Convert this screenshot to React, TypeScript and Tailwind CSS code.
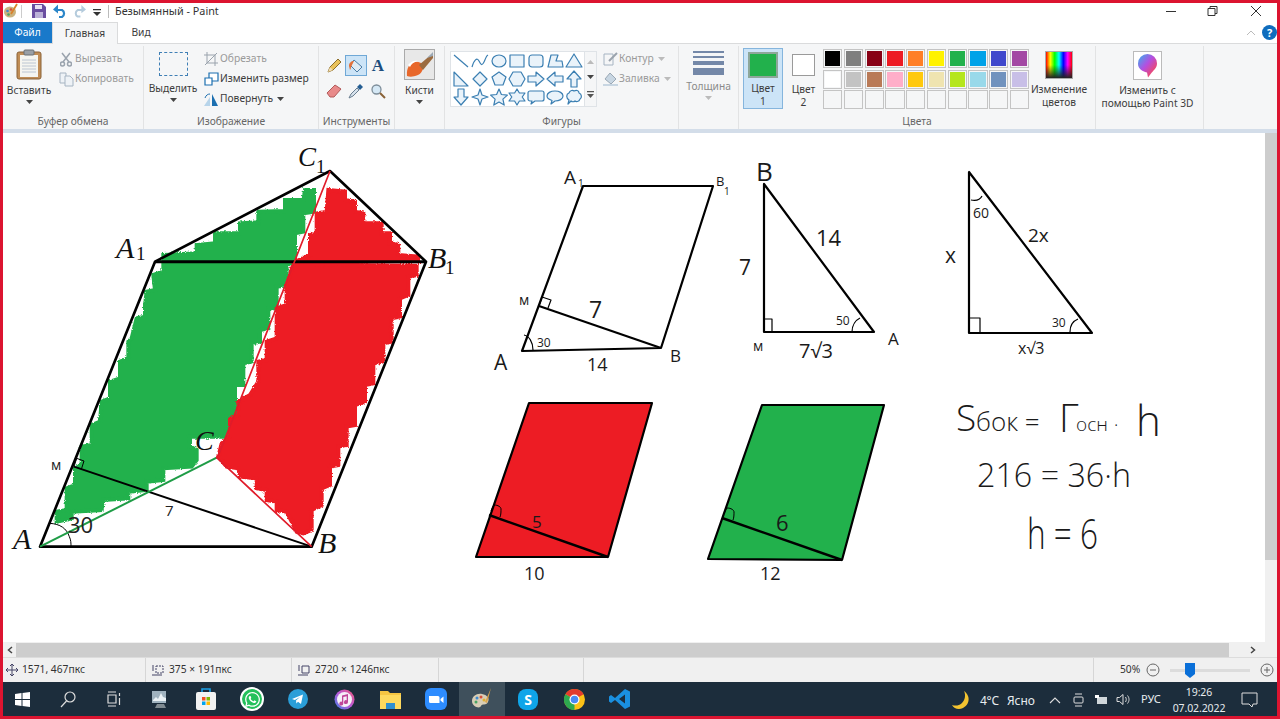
import React from "react";
import { FaWhatsapp } from "react-icons/fa";

const FONT = { fontFamily: '"Noto Sans","Open Sans",sans-serif' };

const Caret = ({ c = "#444" }: { c?: string }) => (
  <svg width="7" height="4" viewBox="0 0 7 4"><path d="M0 0h7L3.5 4z" fill={c} /></svg>
);

function Shape({ d, fill = true }: { d: string; fill?: boolean }) {
  return (
    <svg width="18" height="18" viewBox="0 0 18 18">
      <path d={d} fill={fill ? "#eaf3fa" : "none"} stroke="#3b7fb2" strokeWidth="1.2" strokeLinejoin="round" />
    </svg>
  );
}

const shapes: [string, boolean?][] = [
  ["M2 3L16 15", false],
  ["M1 15C3 8 6 5 8 9s3 5 5 1 2-6 4-7", false],
  ["M2 9a7 6 0 1 0 14 0a7 6 0 1 0-14 0z"],
  ["M2 3h14v12H2z"],
  ["M2 6a3 3 0 0 1 3-3h8a3 3 0 0 1 3 3v6a3 3 0 0 1-3 3H5a3 3 0 0 1-3-3z"],
  ["M2 15L5 3h7l-2 6h6l1 6z"],
  ["M9 2l8 13H1z"],
  ["M2 2l14 14H2z"],
  ["M9 2l7 7-7 7-7-7z"],
  ["M9 2l7 5-3 8H5L2 7z"],
  ["M5 2h8l4 7-4 7H5L1 9z"],
  ["M1 6h8V2l8 7-8 7v-4H1z"],
  ["M17 6H9V2L1 9l8 7v-4h8z"],
  ["M6 17V9H2l7-8 7 8h-4v8z"],
  ["M6 1v8H2l7 8 7-8h-4V1z"],
  ["M9 1l2 6 6 2-6 2-2 6-2-6-6-2 6-2z"],
  ["M9 1l2.4 5.5 6 .6-4.5 4 1.3 6L9 14l-5.200 3.100 1.300-6-4.500-4 6-.6z"],
  ["M9 1l2.400 4H17l-2.800 4 2.800 4h-5.600L9 17l-2.400-4H1l2.800-4L1 5h5.600z"],
  ["M3 3h12a2 2 0 0 1 2 2v6a2 2 0 0 1-2 2H8l-4 3 1-3H3a2 2 0 0 1-2-2V5a2 2 0 0 1 2-2z"],
  ["M9 3c4.400 0 8 2 8 5s-3.600 5-8 5l-4 3 1-3.500C3 11.500 1 10 1 8c0-3 3.600-5 8-5z"],
  ["M4 5c1-3 4-3 5-2 2-1 5-1 5 2 3 1 3 5 1 6-1 3-4 3-5 2-1 1-3 1-4 0l-3 3 1-4C1 10 1 6 4 5z"],
];

const row1 = ["#000000", "#7f7f7f", "#880015", "#ed1c24", "#ff7f27", "#fff200", "#22b14c", "#00a2e8", "#3f48cc", "#a349a4"];
const row2 = ["#ffffff", "#c3c3c3", "#b97a57", "#ffaec9", "#ffc90e", "#efe4b0", "#b5e61d", "#99d9ea", "#7092be", "#c8bfe7"];
const row3 = Array.from({ length: 10 }, () => "#f5f6f7");

function Group({ w, label, children, last }: { w: string; label: string; children: React.ReactNode; last?: boolean }) {
  return (
    <div className={`${w} flex flex-col shrink-0 ${last ? "" : "border-r border-[#e2e3e4]"} h-[83px] mt-[2px]`}>
      <div className="flex-1 flex min-h-0">{children}</div>
      <div className="h-[15px] text-center text-[10.25px] leading-[15px] text-[#666]">{label}</div>
    </div>
  );
}

function SmallBtn({ icon, text, gray, caret }: { icon: React.ReactNode; text: string; gray?: boolean; caret?: boolean }) {
  return (
    <div className={`h-[20px] flex items-center gap-[1px] text-[10.25px] ${gray ? "text-[#9a9a9a]" : "text-[#3c3c3c]"}`}>
      <span className="w-[16px] h-[16px] flex items-center justify-center">{icon}</span>
      <span>{text}</span>
      {caret && <span className="ml-[3px] flex"><Caret c={gray ? "#bbb" : "#444"} /></span>}
    </div>
  );
}

function BigLabel({ children, gray }: { children: React.ReactNode; gray?: boolean }) {
  return <div className={`text-[10.2px] leading-[13px] text-center ${gray ? "text-[#8a8a8a]" : "text-[#3c3c3c]"}`}>{children}</div>;
}

function TitleBar() {
  return (
    <div className="h-[19px] flex items-center bg-white shrink-0 pb-[3px]">
      <svg width="14" height="16" viewBox="0 0 14 16" className="ml-[1px]">
        <ellipse cx="6" cy="9" rx="6" ry="5.500" fill="#c9b27f" />
        <circle cx="3.500" cy="8" r="1.300" fill="#3f8bd0" /><circle cx="7" cy="6.500" r="1.300" fill="#d6503a" /><circle cx="4.500" cy="11.500" r="1.300" fill="#4aa564" />
        <path d="M13 1L7 11" stroke="#d9822b" strokeWidth="1.800" />
      </svg>
      <div className="w-px h-[13px] bg-[#ccc] ml-[3px]" />
      <svg width="14" height="14" viewBox="0 0 14 14" className="ml-[10px]">
        <path d="M0 0h11l3 3v11H0z" fill="#6a4ea0" /><path d="M3 1h7v4H3z" fill="#e8e4f2" /><path d="M3 8h8v6H3z" fill="#bcb2d8" />
      </svg>
      <svg width="14" height="14" viewBox="0 0 14 14" className="ml-[7px]" fill="none">
        <path d="M2 6h7a4 4 0 0 1 0 7H6" stroke="#2b86c9" strokeWidth="2.200" /><path d="M5 1v9L0 6z" fill="#2b86c9" transform="translate(0 -.5)" />
      </svg>
      <svg width="13" height="14" viewBox="0 0 14 14" className="ml-[6px]" fill="none">
        <path d="M12 6H5a4 4 0 0 0 0 7h3" stroke="#b4cbdc" strokeWidth="2.200" /><path d="M9 1v9l5-4z" fill="#b4cbdc" transform="translate(0 -.5)" />
      </svg>
      <svg width="8" height="7" viewBox="0 0 8 7" className="ml-[7px] mt-[2px]"><path d="M0 0h8v1.200H0zM0 3h8L4 7z" fill="#333" /></svg>
      <div className="w-px h-[13px] bg-[#bbb] ml-[7px]" />
      <div className="ml-[6px] text-[10.8px] text-[#333] leading-none">Безымянный - Paint</div>
      <div className="flex-1" />
      <svg width="100" height="12" viewBox="0 0 100 12" className="mr-[15px]" fill="none" stroke="#333" strokeWidth="1">
        <path d="M4 6.500h10" />
        <path d="M46 3.500h7v7h-7zM48 3.500V1.500h7v7h-2" />
        <path d="M89 1l10 10M99 1L89 11" />
      </svg>
    </div>
  );
}

function TabBar() {
  return (
    <div className="h-[22px] flex items-stretch bg-white border-b border-[#dadbdc] shrink-0 text-[10.25px]">
      <div className="w-[49px] bg-[#1979ca] text-white flex items-center justify-center">Файл</div>
      <div className="w-[66px] h-[22px] bg-[#f5f6f7] border-x border-t border-[#dadbdc] text-[#3c3c3c] flex items-center justify-center">Главная</div>
      <div className="w-[46px] text-[#3c3c3c] flex items-center justify-center">Вид</div>
      <div className="flex-1" />
      <div className="flex items-center gap-[6px] pr-[0px]">
        <svg width="10" height="6" viewBox="0 0 10 6" fill="none" stroke="#bbb"><path d="M1 5l4-4 4 4" /></svg>
        <div className="w-[15px] h-[15px] rounded-full bg-[#0f6cbd] text-white text-[11px] font-bold leading-[15px] text-center">?</div>
      </div>
    </div>
  );
}

function Ribbon() {
  return (
    <div className="h-[85px] flex bg-[#f5f6f7] shrink-0 text-[#3c3c3c]">
      <Group w="w-[141px]" label="Буфер обмена">
        <div className="w-[52px] flex flex-col items-center pt-[3px]">
          <svg width="26" height="31" viewBox="0 0 26 31">
            <rect x="1" y="3" width="24" height="27" rx="2" fill="#c08d56" stroke="#8a6238" />
            <rect x="4" y="6" width="18" height="22" fill="#f5f5f0" />
            <path d="M6 11h14M6 14h14M6 17h14M6 20h14M6 23h14" stroke="#bcc6d2" />
            <rect x="8" y="1" width="10" height="5" rx="1" fill="#9aa0a6" stroke="#6b7075" />
          </svg>
          <div className="mt-[4px]"><BigLabel>Вставить</BigLabel></div>
          <div className="mt-[3px] flex"><Caret /></div>
        </div>
        <div className="pl-[3px] pt-[3px]">
          <SmallBtn gray text="Вырезать" icon={<svg width="12" height="15" viewBox="0 0 12 15" fill="none" stroke="#9aa3ad" strokeWidth="1.500"><path d="M2 1l7 9M10 1L3 10" /><circle cx="2.500" cy="12" r="2" /><circle cx="9.500" cy="12" r="2" /></svg>} />
          <SmallBtn gray text="Копировать" icon={<svg width="15" height="15" viewBox="0 0 15 15" fill="#eef2f6" stroke="#a6b4c2"><path d="M1 1h6v10H1z" /><path d="M6 4h5l3 3v7H6z" /></svg>} />
        </div>
      </Group>
      <Group w="w-[175px]" label="Изображение">
        <div className="w-[56px] pl-[2px] flex flex-col items-center pt-[6px]">
          <div className="w-[29px] h-[24px] border border-dashed border-[#3f7fb5]" />
          <div className="mt-[6px]"><BigLabel>Выделить</BigLabel></div>
          <div className="mt-[3px] flex"><Caret /></div>
        </div>
        <div className="pt-[3px] pl-[3px]">
          <SmallBtn gray text="Обрезать" icon={<svg width="14" height="14" viewBox="0 0 14 14" fill="none" stroke="#9aa3ad"><path d="M3 0v11h11M0 3h11v11M1 13L13 1" /></svg>} />
          <SmallBtn text="Изменить размер" icon={<svg width="15" height="14" viewBox="0 0 15 14" fill="#fff" stroke="#1c6fb0" strokeWidth="1.200"><path d="M5 1h9v8H5z" /><path d="M1 6h7v7H1z" /></svg>} />
          <SmallBtn caret text="Повернуть" icon={<svg width="16" height="13" viewBox="0 0 16 13"><path d="M1 13L7 4v9z" fill="#b7d4ea" /><path d="M9 1l6 12H9z" fill="#1c6fb0" /><path d="M2 5c1-3 3-4 5-4" stroke="#1c6fb0" fill="none" /></svg>} />
        </div>
      </Group>
      <Group w="w-[76px]" label="Инструменты">
        <div className="grid grid-cols-3 grid-rows-2 w-[66px] h-[50px] ml-[4px] mt-[7px] place-items-center">
          <svg width="16" height="16" viewBox="0 0 16 16"><path d="M2 14l2-5 8-8 3 3-8 8z" fill="#eac25a" stroke="#8b6d2b" /><path d="M2 14l2-5 3 3z" fill="#f2dcb0" /></svg>
          <div className="w-[22px] h-[21px] bg-[#cce4f7] border border-[#6fa8d6] flex items-center justify-center">
            <svg width="16" height="16" viewBox="0 0 16 16"><path d="M6 2l8 7-5 5-7-7z" fill="#dfeaf3" stroke="#4a7ca5" /><path d="M1 8c0-3 2-5 5-5l-3 6c0 2-1 3-1 3z" fill="#e2703a" /></svg>
          </div>
          <span className="text-[#1c4d7e] font-bold text-[17px] leading-none" style={{ fontFamily: '"Liberation Serif",serif' }}>A</span>
          <svg width="16" height="14" viewBox="0 0 16 14"><path d="M1 9l8-8 6 4-7 8H4z" fill="#e88a8a" stroke="#b25a5a" /></svg>
          <svg width="16" height="16" viewBox="0 0 16 16"><path d="M1 15l2-4 6-6 2 2-6 6z" fill="#d7e2ec" stroke="#6b7f91" /><path d="M9 4l3-3 3 3-3 3z" fill="#245d92" /></svg>
          <svg width="16" height="16" viewBox="0 0 16 16" fill="none"><circle cx="6.500" cy="6.500" r="4.500" fill="#d5e8f5" stroke="#7d8d99" strokeWidth="1.300" /><path d="M10 10l5 5" stroke="#8a6238" strokeWidth="2" /></svg>
        </div>
      </Group>
      <Group w="w-[50px]" label="">
        <div className="w-full flex flex-col items-center pt-[3px]">
          <div className="w-[31px] h-[31px] bg-[#e8e8e8] border border-[#aaa] overflow-hidden">
            <svg width="29" height="29" viewBox="0 0 29 29"><path d="M2 26C1 16 7 9 16 13c4 2 2 10-3 12s-8 2-11 1z" fill="#e8672a" /><path d="M14 15L28 3v5L18 20z" fill="#9b6b3f" /><path d="M22 8l6-6v4z" fill="#9aa8b5" /><path d="M3 15c3-4 7-5 10-4-4 1-7 3-8 6z" fill="#fff" /></svg>
          </div>
          <div className="mt-[4px]"><BigLabel>Кисти</BigLabel></div>
          <div className="mt-[3px] flex"><Caret /></div>
        </div>
      </Group>
      <Group w="w-[234px]" label="Фигуры">
        <div className="ml-[5px] mt-[5px] w-[147px] h-[56px] border border-[#dfe3e7] bg-white flex">
          <div className="grid grid-cols-7 w-[133px] px-[1px] place-items-center">
            {shapes.map(([d, f], i) => <Shape key={i} d={d} fill={f !== false} />)}
          </div>
          <div className="flex-1 border-l border-[#dfe3e7] bg-[#f5f6f7] flex flex-col items-center justify-around py-[2px]">
            <svg width="7" height="4" viewBox="0 0 7 4"><path d="M0 4h7L3.500 0z" fill="#bbb" /></svg>
            <Caret />
            <svg width="7" height="7" viewBox="0 0 7 7"><path d="M0 0h7v1.200H0zM0 3h7L3.500 7z" fill="#555" /></svg>
          </div>
        </div>
        <div className="pl-[5px] pt-[3px]">
          <SmallBtn gray caret text="Контур" icon={<svg width="15" height="14" viewBox="0 0 15 14" fill="none" stroke="#a6b4c2"><path d="M1 2h9v11H1z" /><path d="M6 9l8-8" stroke="#9aa3ad" strokeWidth="2" /></svg>} />
          <SmallBtn gray caret text="Заливка" icon={<svg width="15" height="14" viewBox="0 0 15 14"><path d="M7 1l6 6-5 5-6-5z" fill="#c8d6e2" stroke="#9aa8b5" /><path d="M0 12h15v2H0z" fill="#c8d6e2" /></svg>} />
        </div>
      </Group>
      <Group w="w-[60px]" label="">
        <div className="w-full flex flex-col items-center pt-[5px]">
          <div className="w-[31px] flex flex-col gap-[3px]">
            <div className="h-[1.500px] bg-[#7488a8]" /><div className="h-[2px] bg-[#7488a8]" /><div className="h-[4px] bg-[#7488a8]" /><div className="h-[7px] bg-[#7488a8]" />
          </div>
          <div className="mt-[5px]"><BigLabel gray>Толщина</BigLabel></div>
          <div className="mt-[3px] flex"><Caret c="#bbb" /></div>
        </div>
      </Group>
      <Group w="w-[357px]" label="Цвета">
        <div className="ml-[4px] mt-[2px] w-[40px] h-[61px] bg-[#cce4f7] border border-[#85b5dd] flex flex-col items-center pt-[3px]">
          <div className="w-[30px] h-[30px] bg-[#22b14c] border-2 border-[#8da79a]" />
          <div className="mt-[4px]"><BigLabel>Цвет<br />1</BigLabel></div>
        </div>
        <div className="ml-[3px] mt-[2px] w-[35px] h-[61px] flex flex-col items-center pt-[6px]">
          <div className="w-[23px] h-[24px] bg-white border border-[#9a9a9a]" />
          <div className="mt-[7px]"><BigLabel>Цвет<br />2</BigLabel></div>
        </div>
        <div className="ml-[2px] mt-[3px] grid grid-cols-10 gap-[1.500px] w-[206px] h-[60px]">
          {[...row1, ...row2, ...row3].map((c, i) => (
            <div key={i} className="border border-[#c4c4c4] p-px bg-[#f5f6f7]">
              <div className="w-full h-full" style={{ background: c }} />
            </div>
          ))}
        </div>
        <div className="w-[60px] flex flex-col items-center pt-[5px]">
          <div className="w-[28px] h-[28px] border border-[#aaa] bg-[linear-gradient(180deg,transparent_50%,#222_100%),linear-gradient(90deg,#f00,#ff0,#0f0,#0ff,#00f,#f0f,#f00)]" />
          <div className="mt-[4px]"><BigLabel>Изменение<br />цветов</BigLabel></div>
        </div>
      </Group>
      <Group w="w-[108px]" label="">
        <div className="w-full flex flex-col items-center pt-[5px] pr-[4px]">
          <div className="w-[29px] h-[29px] bg-white border border-[#bbb] flex items-center justify-center">
            <svg width="19" height="24" viewBox="0 0 19 24">
              <defs><linearGradient id="p3d" x1="0" y1="0" x2="1" y2="1"><stop offset="0" stopColor="#30b6f0" /><stop offset=".45" stopColor="#b44fe0" /><stop offset=".8" stopColor="#f0486a" /><stop offset="1" stopColor="#f7b32b" /></linearGradient></defs>
              <path d="M9.500 0a9.500 9.500 0 0 1 9.500 9.500c0 5-4 7-6 10l-3 4-1-5C4 17 0 15 0 9.500A9.500 9.500 0 0 1 9.500 0z" fill="url(#p3d)" />
            </svg>
          </div>
          <div className="mt-[4px]"><BigLabel>Изменить с<br />помощью Paint 3D</BigLabel></div>
        </div>
      </Group>
      <div className="flex-1" />
    </div>
  );
}

function Figure1() {
  const green = "490,360 590,355 590,330 645,325 645,295 720,295 720,265 775,262 775,230 855,228 855,195 910,195 915,165 942,165 942,230 910,235 910,290 885,295 885,375 860,392 860,450 830,455 830,520 805,520 805,580 780,585 780,620 755,625 755,680 730,685 730,750 705,750 705,840 680,845 680,905 640,905 570,905 570,935 590,945 590,975 575,995 490,1000 490,1035 440,1040 440,1065 385,1070 385,1090 310,1095 305,1125 215,1130 215,1150 170,1160 170,1130 200,1125 200,1060 225,1050 225,1000 245,990 245,935 275,930 275,870 300,860 305,800 330,790 330,740 360,730 360,680 385,670 385,620 395,610 410,550 435,545 435,510 440,470 465,465 460,420 490,410";
  const red1 = "985,165 1035,170 1035,195 1065,200 1065,230 1090,235 1090,265 1145,265 1145,295 1170,295 1170,325 1195,330 1195,360 1255,365 1255,378 890,378 930,360 930,300 950,295 950,235 980,230";
  const red2 = "880,388 1250,392 1250,420 1225,425 1225,480 1200,490 1200,545 1175,550 1175,620 1150,625 1150,680 1120,685 1120,745 1095,750 1095,800 1065,810 1065,870 1040,875 1040,930 1015,935 1015,990 990,995 990,1050 965,1060 965,1110 935,1125 935,1185 910,1195 890,1190 860,1130 830,1125 830,1100 800,1095 800,1065 770,1060 770,1030 720,1025 715,1000 680,995 655,965 665,925 690,905 690,850 715,840 715,800 750,780 775,740 775,680 800,675 800,620 830,610 830,520 860,510 860,450";
  return (
    <g>
      <g transform="translate(0 135) scale(.33333)">
        <g filter="url(#rough)">
          <polygon points={green} fill="#22b14c" stroke="#22b14c" strokeWidth="12" />
          <polygon points={red1} fill="#ed1c24" stroke="#ed1c24" strokeWidth="12" />
          <polygon points={red2} fill="#ed1c24" stroke="#ed1c24" strokeWidth="12" />
        </g>
        <g fill="none" stroke="#000" strokeWidth="8" strokeLinejoin="round">
          <path d="M120 1235L465 380L990 108L1278 380L935 1235z" />
          <path d="M465 380H1278" strokeWidth="9" />
          <path d="M222 995L935 1235" strokeWidth="6" />
          <path d="M222 995l8-25 22 8-8 25" strokeWidth="3" />
          <path d="M150 1165c30 2 50 15 58 40M208 1205c5 10 5 20 5 30" strokeWidth="3" />
        </g>
        <path d="M120 1235L650 968" stroke="#1e9c46" strokeWidth="6" />
        <path d="M935 1235L650 968L660 950L990 108" stroke="#e01c2a" strokeWidth="5" fill="none" />
      </g>
      <g fontFamily='"Liberation Serif",serif' fontStyle="italic" fill="#111">
        <text x="116" y="258" fontSize="30">A</text>
        <text x="428" y="268" fontSize="30">B</text>
        <text x="298" y="166" fontSize="27">C</text>
        <text x="13" y="549" fontSize="30">A</text>
        <text x="318" y="553" fontSize="30">B</text>
        <text x="195" y="450" fontSize="28">C</text>
      </g>
      <g fontFamily='"Liberation Serif",serif' fontSize="19" fill="#111">
        <text x="136" y="260">1</text>
        <text x="445" y="274">1</text>
        <text x="316" y="173">1</text>
      </g>
      <g fontFamily='"Open Sans",sans-serif' fill="#222">
        <text x="51" y="470" fontSize="14">м</text>
        <text x="68" y="533" fontSize="22">30</text>
        <text x="165" y="516" fontSize="15">7</text>
      </g>
    </g>
  );
}

function Hand({ x, y, s = 14, children, w = 400, len }: { x: number; y: number; s?: number; children: React.ReactNode; w?: number; len?: number }) {
  return (
    <text
      x={x}
      y={y}
      fontSize={s}
      fontWeight={w}
      fontFamily='"Open Sans",sans-serif'
      fill="#1a1a1a"
      textLength={len}
      lengthAdjust={len ? "spacingAndGlyphs" : undefined}
    >
      {children}
    </text>
  );
}

function Drawing() {
  return (
    <svg className="flex-1 h-full block" viewBox="3 133 1262 509" width="1262" height="509">
      <defs>
        <filter id="rough" x="-5%" y="-5%" width="110%" height="110%" colorInterpolationFilters="sRGB">
          <feTurbulence type="fractalNoise" baseFrequency="0.25" numOctaves="2" seed="4" result="n" />
          <feDisplacementMap in="SourceGraphic" in2="n" scale="9" xChannelSelector="R" yChannelSelector="G" />
        </filter>
      </defs>
      <Figure1 />
      <g fill="none" stroke="#000" strokeWidth="2.200" strokeLinejoin="round">
        <path d="M522 351L583 186H713L661 348z" />
        <path d="M539 306L661 348" />
        <path d="M539 306l3-9 9 3-3 8M524 335c5 1 9 7 9 15" strokeWidth="1.200" />
        <path d="M764 184V332H874z" />
        <path d="M764 319h8v13M852 332c0-7 4-12 8-14" strokeWidth="1.200" />
        <path d="M969 172V333H1092z" />
        <path d="M971 200c5 1 9 0 11-4M970 318h10v14M1070 332c0-6 3-11 8-13" strokeWidth="1.200" />
      </g>
      <g>
        <Hand x={564} y={184} s={19}>A</Hand><Hand x={578} y={187} s={10}>1</Hand>
        <Hand x={716} y={186} s={13}>B</Hand><Hand x={724} y={195} s={10}>1</Hand>
        <Hand x={519} y={305} s={14}>м</Hand>
        <Hand x={589} y={318} s={23}>7</Hand>
        <Hand x={537} y={347} s={12}>30</Hand>
        <Hand x={494} y={370} s={21}>A</Hand>
        <Hand x={587} y={371} s={18}>14</Hand>
        <Hand x={670} y={362} s={17}>B</Hand>
        <Hand x={756} y={181} s={26}>В</Hand>
        <Hand x={816} y={246} s={22}>14</Hand>
        <Hand x={739} y={275} s={21}>7</Hand>
        <Hand x={836} y={325} s={12}>50</Hand>
        <Hand x={753} y={351} s={14}>м</Hand>
        <Hand x={799} y={358} s={20}>7√3</Hand>
        <Hand x={888} y={345} s={17}>A</Hand>
        <Hand x={973} y={218} s={14}>60</Hand>
        <Hand x={1028} y={242} s={19}>2x</Hand>
        <Hand x={945} y={263} s={21}>x</Hand>
        <Hand x={1052} y={327} s={12}>30</Hand>
        <Hand x={1018} y={354} s={16}>x√3</Hand>
        <Hand x={956} y={431} s={37} w={300}>S</Hand>
        <Hand x={976} y={431} s={26} w={300}>бок =</Hand>
        <Hand x={1059} y={432} s={39} w={300}>Г</Hand>
        <Hand x={1076} y={431} s={19} w={300}>осн</Hand>
        <Hand x={1114} y={431} s={18} w={300}>·</Hand>
        <Hand x={1136} y={436} s={42} w={300}>h</Hand>
        <Hand x={977} y={487} s={33} w={300} len={154}>216 = 36·h</Hand>
        <Hand x={1027} y={549} s={42} w={300} len={71}>h = 6</Hand>
      </g>
      <g stroke="#000" strokeLinejoin="round" fill="none">
        <path d="M476 557L529 403H652L608 557z" fill="#ed1c24" strokeWidth="2.200" />
        <path d="M489 515L608 557" strokeWidth="2.400" />
        <path d="M491 511c1-3 2-5 3-6 4 0 7 2 7 4s0 6-1 8" strokeWidth="1" />
        <path d="M708 559L762 405H884L842 560z" fill="#22b14c" strokeWidth="2.200" />
        <path d="M722 518L842 560" strokeWidth="2.400" />
        <path d="M724 514c1-3 2-5 3-6 4 0 7 2 7 4s0 6-1 8" strokeWidth="1" />
      </g>
      <Hand x={532} y={528} s={17}>5</Hand>
      <Hand x={524} y={580} s={18}>10</Hand>
      <Hand x={776} y={531} s={22}>6</Hand>
      <Hand x={760} y={580} s={18}>12</Hand>
    </svg>
  );
}

function Scrollbars() {
  return (
    <div className="w-[12px] h-full bg-[#f0f0f0] flex flex-col">
      <div className="h-[427px] bg-[#cdcdcd]" />
    </div>
  );
}

function HScroll() {
  return (
    <div className="h-[15px] bg-[#f0f0f0] flex items-center shrink-0">
      <div className="w-[13px] flex justify-center"><svg width="6" height="8" viewBox="0 0 6 8" fill="none" stroke="#444" strokeWidth="1.500"><path d="M5 1L1.500 4 5 7" /></svg></div>
      <div className="w-[1213px] h-[14px] bg-[#cdcdcd]" />
      <div className="flex-1 flex justify-center"><svg width="6" height="8" viewBox="0 0 6 8" fill="none" stroke="#444" strokeWidth="1.500"><path d="M1 1l3.500 3L1 7" /></svg></div>
    </div>
  );
}

function StatusCell({ w, icon, text }: { w: string; icon?: React.ReactNode; text?: string }) {
  return (
    <div className={`${w} h-full border-r border-[#d6d6d6] flex items-center gap-[4px] shrink-0 pl-[3px]`}>
      {icon}
      {text && <span className="text-[10.25px] text-[#333]">{text}</span>}
    </div>
  );
}

function StatusBar() {
  return (
    <div className="h-[25px] bg-[#f0f0f0] border-t border-[#dcdcdc] flex items-center shrink-0">
      <StatusCell w="w-[143px]" text="1571, 467пкс" icon={<svg width="12" height="12" viewBox="0 0 12 12" fill="none" stroke="#446"><path d="M6 0v12M0 6h12M4 2l2-2 2 2M4 10l2 2 2-2M2 4L0 6l2 2M10 4l2 2-2 2" /></svg>} />
      <StatusCell w="w-[146px]" text="375 × 191пкс" icon={<svg width="14" height="13" viewBox="0 0 14 13" className="ml-[2px]" fill="none" stroke="#446"><path d="M5 2h7v7H5z" strokeDasharray="2 1" /><path d="M2 1v6M1 11h10" /></svg>} />
      <StatusCell w="w-[147px]" text="2720 × 1246пкс" icon={<svg width="14" height="13" viewBox="0 0 14 13" className="ml-[2px]" fill="none" stroke="#446"><path d="M5 2h7v7H5z" /><path d="M2 1v6M1 11h10" /></svg>} />
      <StatusCell w="w-[145px]" />
      <div className="w-[510px] h-full border-r border-[#d6d6d6] shrink-0" />
      <div className="flex-1 flex items-center text-[10.25px] text-[#333] pl-[26px]">
        <span>50%</span>
        <svg width="14" height="14" viewBox="0 0 14 14" className="ml-[6px]" fill="none" stroke="#666"><circle cx="7" cy="7" r="6" /><path d="M4 7h6" /></svg>
        <div className="ml-[10px] w-[80px] h-[3px] bg-[#dcdcdc] flex items-center relative">
          <div className="absolute left-[15px] top-[-6px] w-[10px] h-[15px]">
            <svg width="10" height="15" viewBox="0 0 10 15"><path d="M0 0h10v11l-5 4-5-4z" fill="#0a6fd8" /></svg>
          </div>
        </div>
        <svg width="14" height="14" viewBox="0 0 14 14" className="ml-[10px]" fill="none" stroke="#666"><circle cx="7" cy="7" r="6" /><path d="M4 7h6M7 4v6" /></svg>
      </div>
    </div>
  );
}

const TaskIcon = ({ children, active }: { children: React.ReactNode; active?: boolean }) => (
  <div className={`w-[46px] h-full flex items-center justify-center shrink-0 ${active ? "bg-[#3f505c]" : ""}`}>{children}</div>
);

function Taskbar() {
  return (
    <div className="h-[34px] bg-[#1c2d3c] flex items-center shrink-0 text-white">
      <div className="flex items-center h-full -ml-[4px]">
        <TaskIcon><svg width="15" height="15" viewBox="0 0 15 15" fill="#fff"><path d="M0 2l6.500-1v6H0zM7.500 1L15 0v7H7.500zM0 8h6.500v6L0 13zM7.500 8H15v7l-7.500-1z" /></svg></TaskIcon>
        <TaskIcon><svg width="16" height="17" viewBox="0 0 16 17" fill="none" stroke="#ddd" strokeWidth="1.200"><circle cx="10" cy="6" r="5" /><path d="M6.500 10L1 16" /></svg></TaskIcon>
        <TaskIcon><svg width="14" height="16" viewBox="0 0 14 16" fill="none" stroke="#ddd" strokeWidth="1.200"><path d="M1 1h8M1 15h8M1 4h8v8H1zM12.500 2v3M12.500 7v7" /></svg></TaskIcon>
        <TaskIcon><svg width="20" height="20" viewBox="0 0 20 20"><path d="M2 2h14v12H2z" fill="#9fb2bf" /><path d="M3 11l3-3 2 2 3-6 2 4 3 1v3H3z" fill="#eaf1f5" /><path d="M7 15h7l2 4H5z" fill="#7f8a91" /></svg></TaskIcon>
        <TaskIcon><svg width="22" height="24" viewBox="0 0 22 24"><path d="M7 5V2h8v3" fill="none" stroke="#1aa0e8" strokeWidth="1.600" /><rect x="1" y="5" width="20" height="18" rx="2" fill="#f2f2f2" /><path d="M7 10h3.500v3.500H7z" fill="#f25022" /><path d="M11.500 10H15v3.500h-3.500z" fill="#7fba00" /><path d="M7 14.500h3.500V18H7z" fill="#00a4ef" /><path d="M11.500 14.500H15V18h-3.500z" fill="#ffb900" /></svg></TaskIcon>
        <TaskIcon><span className="w-[24px] h-[24px] rounded-full bg-[#25c15c] border-2 border-white flex items-center justify-center"><FaWhatsapp className="text-white w-[17px] h-[17px]" /></span></TaskIcon>
        <TaskIcon><svg width="20" height="20" viewBox="0 0 20 20"><circle cx="10" cy="10" r="10" fill="#2a9ed8" /><path d="M4 10l11-4.500-2 9.500-3-2.200-1.600 1.700-.4-3 4-3.500-5.200 3z" fill="#fff" /></svg></TaskIcon>
        <TaskIcon><svg width="21" height="21" viewBox="0 0 21 21"><defs><linearGradient id="mus" x1="0" y1="1" x2="1" y2="0"><stop offset="0" stopColor="#3f7fe8" /><stop offset=".5" stopColor="#b85ad8" /><stop offset="1" stopColor="#f05a78" /></linearGradient></defs><circle cx="10.500" cy="10.500" r="10" fill="url(#mus)" /><circle cx="10.500" cy="10.500" r="7.500" fill="#f6f0f8" /><path d="M8 6.500l6-1.500v8a2 2 0 1 1-1.300-1.800V7.200L9.300 8v6.500a2 2 0 1 1-1.300-1.800z" fill="#c0479a" /></svg></TaskIcon>
        <TaskIcon><svg width="21" height="19" viewBox="0 0 21 19"><path d="M0 1h8l2 2h11v4H0z" fill="#f5c542" /><path d="M0 5h21v14H0z" fill="#fdd95e" /><path d="M6 13h9v6H6z" fill="#2e8fd0" /></svg></TaskIcon>
        <TaskIcon><svg width="22" height="22" viewBox="0 0 22 22"><rect width="22" height="22" rx="6" fill="#2d8cff" /><path d="M4 8h9a1.500 1.500 0 0 1 1.500 1.500V15H5.500A1.500 1.500 0 0 1 4 13.500zM15.500 11l3-2.500V15l-3-2.500z" fill="#fff" /></svg></TaskIcon>
        <TaskIcon active><svg width="24" height="24" viewBox="0 0 24 24"><path d="M2 14c0-5 5-8 10-7 5 1 8 4 6 8s-6 1-7 4-9 1-9-5z" fill="#d8cdb5" /><circle cx="7" cy="11" r="1.500" fill="#3f8bd0" /><circle cx="11" cy="10" r="1.500" fill="#d6503a" /><circle cx="6" cy="15" r="1.500" fill="#4aa564" /><circle cx="14" cy="13" r="1.500" fill="#e0b030" /><path d="M21 1l-6 14 2 1z" fill="#d9a24b" /></svg></TaskIcon>
        <TaskIcon><span className="w-[20px] h-[21px] rounded-[8px] bg-[#0fa5e9] text-white text-[14px] font-bold flex items-center justify-center">S</span></TaskIcon>
        <TaskIcon><svg width="21" height="21" viewBox="-10.500 -10.500 21 21"><circle r="10.500" fill="#fbc116" /><path d="M0 0L-9.100-5.250A10.500 10.500 0 0 1 9.100-5.250z" fill="#e33b2e" /><path d="M0 0L-9.100-5.250A10.500 10.500 0 0 0 0 10.500z" fill="#2da94f" /><circle r="5" fill="#fff" /><circle r="3.800" fill="#4a8af4" /></svg></TaskIcon>
        <TaskIcon><svg width="22" height="22" viewBox="0 0 22 22"><path d="M16 1l5 2.500v15L16 21 6 12l-4 3-2-1.500V8.500L2 7l4 3zM16 6.500L10 11l6 4.500z" fill="#1a90e0" /></svg></TaskIcon>
      </div>
      <div className="flex-1" />
      <svg width="18" height="20" viewBox="0 0 18 20" className="mr-[10px] mt-[2px]"><path d="M12 1c2 4 1 9-2 12S3 16 0 15c2 4 7 5 11 3s7-7 5-12c-1-2-2-4-4-5z" fill="#f4c430" /></svg>
      <span className="text-[12px] mr-[8px] mt-[3px] tracking-[-0.2px] text-[#e8ecef]">4°C</span>
      <span className="text-[12px] mr-[14px] mt-[3px] text-[#e8ecef]">Ясно</span>
      <svg width="12" height="7" viewBox="0 0 12 7" fill="none" stroke="#ddd" strokeWidth="1.100" className="mr-[12px] mt-[2px]"><path d="M1 6l5-5 5 5" /></svg>
      <svg width="11" height="16" viewBox="0 0 11 16" fill="none" stroke="#ddd" className="mr-[10px] mt-[2px]"><path d="M2 2h7M2 14h7" /><rect x="1" y="5" width="9" height="6" rx="1" /></svg>
      <svg width="14" height="11" viewBox="0 0 14 11" className="mr-[8px]"><path d="M3 3h10v7H3z" fill="#cfd6da" /><path d="M1 1h4v3H1z" fill="#fff" /></svg>
      <svg width="15" height="13" viewBox="0 0 15 13" fill="none" stroke="#ddd" className="mr-[10px]"><path d="M1 4.500h2.500L7 1.500v10L3.500 8.500H1zM9.500 4c1 1.500 1 3.500 0 5M11.500 2.500c2 2.500 2 5.500 0 8" /></svg>
      <span className="text-[11px] w-[27px] mt-[1px] text-[#e8ecef]">РУС</span>
      <div className="w-[62px] text-center text-[10.5px] leading-[16px] mt-[2px] text-[#e8ecef] tracking-[-0.1px]">19:26<br />07.02.2022</div>
      <svg width="17" height="16" viewBox="0 0 17 16" fill="none" stroke="#ddd" className="ml-[11px] mr-[19px] mt-[2px]"><path d="M1 1h15v11h-4l-1 3-3-3H1z" /></svg>
    </div>
  );
}

export default function App() {
  return (
    <div className="w-[1280px] h-[719px] border-[3px] border-[#dc1430] flex flex-col overflow-hidden bg-white" style={FONT}>
      <TitleBar />
      <TabBar />
      <Ribbon />
      <div className="h-[4px] bg-[#d3dde9] shrink-0" />
      <div className="flex-1 min-h-0 flex bg-white">
        <Drawing />
        <Scrollbars />
      </div>
      <HScroll />
      <StatusBar />
      <Taskbar />
    </div>
  );
}
